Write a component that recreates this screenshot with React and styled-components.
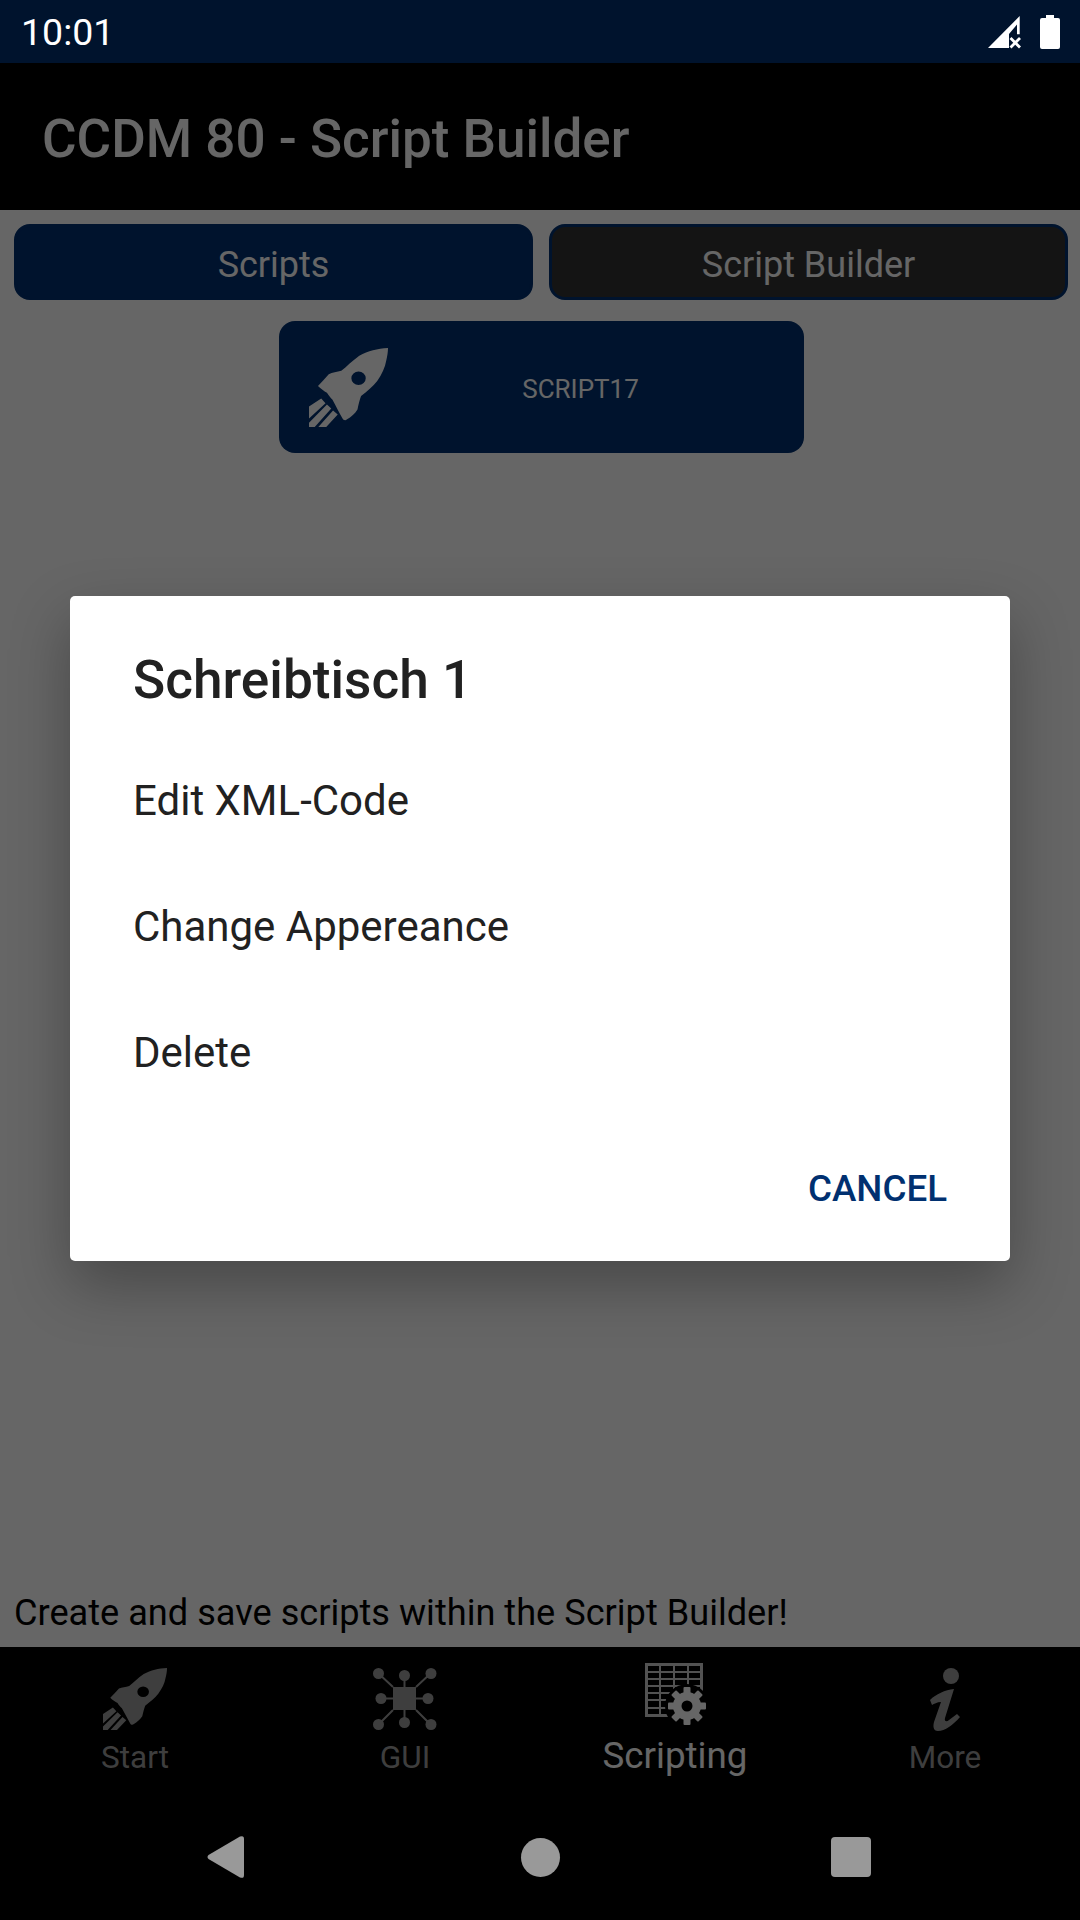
import React from 'react';
import styled, { createGlobalStyle } from 'styled-components';

const GlobalStyle = createGlobalStyle`
  html, body {
    margin: 0;
    padding: 0;
    background: #000;
  }
  * {
    box-sizing: border-box;
  }
  body {
    font-family: Roboto, "Noto Sans", sans-serif;
  }
`;

const Screen = styled.div`
  width: 1080px;
  height: 1920px;
  display: flex;
  flex-direction: column;
  overflow: hidden;
`;

const StatusBar = styled.div`
  height: 63px;
  flex: none;
  background: #00132d;
  display: flex;
  align-items: center;
  padding: 0 20px 0 21px;
  color: #fff;
`;

const Clock = styled.span`
  font-size: 37.5px;
  flex: 1;
`;

const StatusIcons = styled.div`
  display: flex;
  align-items: center;
  gap: 16px;
`;

const Main = styled.div`
  position: relative;
  flex: 1;
  display: flex;
  flex-direction: column;
  min-height: 0;
  background: #fff;
`;

const Toolbar = styled.header`
  height: 147px;
  flex: none;
  background: #000;
  color: #fff;
  display: flex;
  align-items: center;
  padding: 5px 0 0 42px;
  font-size: 53px;
  font-weight: 500;
`;

const Content = styled.main`
  flex: 1;
  min-height: 0;
  display: flex;
  flex-direction: column;
  padding: 14px 12px 0 14px;
`;

const TabSwitch = styled.div`
  display: grid;
  grid-template-columns: 519px 519px;
  column-gap: 16px;
`;

const SwitchButton = styled.div`
  height: 76px;
  border-radius: 16px;
  display: flex;
  align-items: center;
  justify-content: center;
  padding-top: 5px;
  color: #fff;
  font-size: 36px;
  background: ${p => (p.$active ? '#343434' : '#003070')};
  border: 3px solid #003070;
`;

const ScriptCard = styled.div`
  width: 525px;
  height: 132px;
  margin: 21px 0 0 265px;
  border-radius: 16px;
  background: #003070;
  color: #fff;
  display: flex;
  align-items: center;
  padding: 0 31px 0 30px;
`;

const ScriptLabel = styled.span`
  flex: 1;
  text-align: center;
  padding-top: 3px;
  font-size: 26px;
`;

const Hint = styled.p`
  margin: auto 0 13px;
  color: #000;
  font-size: 36.15px;
  line-height: 43px;
`;

const TabBar = styled.nav`
  height: 147px;
  flex: none;
  background: #000;
  display: grid;
  grid-template-columns: 270px 270px 270px 270px;
`;

const TabItem = styled.div`
  display: flex;
  flex-direction: column;
  align-items: center;
  padding-top: ${p => (p.$active ? '16px' : '21px')};
  color: ${p => (p.$active ? '#fff' : '#9c9c9c')};
  font-size: ${p => (p.$active ? '36.75px' : '31.5px')};
  line-height: 40px;
`;

const TabIcon = styled.div`
  height: 63px;
  margin-bottom: ${p => (p.$active ? '10px' : '7px')};
  display: flex;
  justify-content: center;
`;

const Scrim = styled.div`
  position: absolute;
  inset: 0;
  background: rgba(0, 0, 0, 0.6);
  display: flex;
  align-items: center;
  justify-content: center;
`;

const Dialog = styled.div`
  width: 940px;
  height: 665px;
  background: #fff;
  border-radius: 5px;
  box-shadow: 0 24px 60px rgba(0, 0, 0, 0.3);
  padding: 50px 0 26px;
  display: flex;
  flex-direction: column;
  color: #212121;
`;

const DialogTitle = styled.h2`
  margin: 0 0 23px;
  padding-left: 63px;
  font-size: 53.2px;
  line-height: 68px;
  font-weight: 500;
`;

const DialogItem = styled.div`
  height: 126px;
  flex: none;
  padding-left: 63px;
  display: flex;
  align-items: center;
  font-size: 42px;
`;

const DialogActions = styled.div`
  margin-top: auto;
  height: 94px;
  padding-right: 63px;
  display: flex;
  align-items: center;
  justify-content: flex-end;
`;

const CancelButton = styled.span`
  color: #003070;
  font-size: 36.75px;
  font-weight: 500;
`;

const SystemNav = styled.div`
  height: 126px;
  flex: none;
  background: #000;
  display: grid;
  grid-template-columns: 450px 180px 450px;
  align-items: center;
  justify-items: center;
`;

const BackSlot = styled.div`
  justify-self: end;
  margin-right: 206px;
  display: flex;
`;

const HomeDot = styled.div`
  width: 39px;
  height: 39px;
  border-radius: 50%;
  background: #999;
`;

const RecentSquare = styled.div`
  justify-self: start;
  margin-left: 201px;
  width: 40px;
  height: 40px;
  border-radius: 4px;
  background: #999;
`;

const SignalIcon = () => (
  <svg width="36" height="34" viewBox="0 0 36 34" fill="#fff">
    <path d="M0 33 L31.7 1 V19.3 H29 V9.5 L21 19 V33 Z" />
    <path d="M22.5 23 L32 32.5 M32 23 L22.5 32.5" stroke="#fff" strokeWidth="2.8" fill="none" />
  </svg>
);

const BatteryIcon = () => (
  <svg width="20" height="34" viewBox="0 0 20 34" fill="#fff">
    <path d="M6 0 H14 V3 H18 Q20 3 20 5 V32 Q20 34 18 34 H2 Q0 34 0 32 V5 Q0 3 2 3 H6 Z" />
  </svg>
);

const RocketIcon = ({ width, height }) => (
  <svg width={width} height={height} viewBox="0 0 220 235" preserveAspectRatio="none" fill="currentColor">
    <path
      fillRule="evenodd"
      d="M220 0 C190 2 165 8 140 23 C120 38 105 55 90 68 C78 72 65 73 55 78 C45 90 35 102 25 113 C33 122 42 128 50 133 C55 142 60 148 65 153 C75 172 85 195 95 213 C100 216 103 215 105 213 C118 205 128 195 135 183 C138 168 141 155 145 143 C162 128 178 115 190 98 C203 78 212 58 215 38 C218 25 220 12 220 0 Z M138 70 A20 20 0 1 0 138.01 110 A20 20 0 1 0 138 70 Z"
    />
    <path d="M0 174 L34 150 L46 164 L0 210 Z M50 168 L62 180 L16 235 H0 V222 Z M67 186 L80 198 L48 235 H26 Z" />
  </svg>
);

const GuiIcon = () => (
  <svg width="64" height="62" viewBox="0 0 64 62" fill="currentColor" stroke="currentColor">
    <rect x="20" y="19" width="23" height="23" strokeWidth="0" />
    <g strokeWidth="2">
      <path d="M5 5 L20 19 M58 5 L43 19 M5 57 L20 42 M58 57 L43 42" />
      <path d="M31.5 8 V19 M8.5 30.5 H20 M55 30.5 H43 M31.5 55 V42" />
    </g>
    <g strokeWidth="0">
      <circle cx="5.5" cy="5.5" r="5.5" />
      <circle cx="58" cy="5.5" r="5.5" />
      <circle cx="5.5" cy="56.5" r="5.5" />
      <circle cx="58" cy="56.5" r="5.5" />
      <circle cx="31.5" cy="7.5" r="5.5" />
      <circle cx="8" cy="30.5" r="5.5" />
      <circle cx="55" cy="30.5" r="5.5" />
      <circle cx="31.5" cy="54.5" r="5.5" />
    </g>
  </svg>
);

const gearTeeth = [0, 45, 90, 135, 180, 225, 270, 315];

const ScriptingIcon = () => (
  <svg width="61" height="62" viewBox="0 0 61 62" fill="currentColor">
    <g stroke="currentColor" fill="none" opacity="0.8">
      <rect x="1.5" y="1.5" width="55" height="51" strokeWidth="3" />
      <path d="M15 1 V53 M29 1 V53 M43 1 V53" strokeWidth="2" />
      <path d="M1 9 H57 M1 16 H57 M1 23 H57 M1 30 H57 M1 37 H57 M1 45 H57" strokeWidth="1.8" />
    </g>
    <circle cx="42" cy="43" r="22" fill="#000" />
    <circle cx="42" cy="43" r="14" />
    {gearTeeth.map(angle => (
      <rect key={angle} x="38.5" y="24" width="7" height="8" rx="1" transform={`rotate(${angle} 42 43)`} />
    ))}
    <circle cx="42" cy="43" r="5.5" fill="#000" />
  </svg>
);

const InfoIcon = () => (
  <svg width="31" height="63" viewBox="0 0 31 63" fill="currentColor">
    <circle cx="21" cy="8" r="8" />
    <path d="M0 32 C6 26 15 22 24 21 L15 50 C14 54 17 54 19 52 L27 46 L30 49 C23 57 15 63 8 63 C3 63 3 58 4 54 L11 34 C7 34 4 36 2 37 Z" />
  </svg>
);

const BackIcon = () => (
  <svg width="37" height="42" viewBox="0 0 37 42" fill="#999">
    <path d="M1.5 19 L33 .6 Q37 -1 37 3 V39 Q37 43 33 41.4 L1.5 23 Q-.5 21 1.5 19 Z" />
  </svg>
);

const dialogItems = ['Edit XML-Code', 'Change Appereance', 'Delete'];

const App = () => {
  return (
    <Screen>
      <GlobalStyle />
      <StatusBar>
        <Clock>10:01</Clock>
        <StatusIcons>
          <SignalIcon />
          <BatteryIcon />
        </StatusIcons>
      </StatusBar>

      <Main>
        <Toolbar>CCDM 80 - Script Builder</Toolbar>

        <Content>
          <TabSwitch>
            <SwitchButton>Scripts</SwitchButton>
            <SwitchButton $active>Script Builder</SwitchButton>
          </TabSwitch>
          <ScriptCard>
            <RocketIcon width={79} height={79} />
            <ScriptLabel>SCRIPT17</ScriptLabel>
          </ScriptCard>
          <Hint>Create and save scripts within the Script Builder!</Hint>
        </Content>

        <TabBar>
          <TabItem>
            <TabIcon><RocketIcon width={64} height={62} /></TabIcon>
            Start
          </TabItem>
          <TabItem>
            <TabIcon><GuiIcon /></TabIcon>
            GUI
          </TabItem>
          <TabItem $active>
            <TabIcon $active><ScriptingIcon /></TabIcon>
            Scripting
          </TabItem>
          <TabItem>
            <TabIcon><InfoIcon /></TabIcon>
            More
          </TabItem>
        </TabBar>

        <Scrim>
          <Dialog>
            <DialogTitle>Schreibtisch 1</DialogTitle>
            {dialogItems.map(item => (
              <DialogItem key={item}>{item}</DialogItem>
            ))}
            <DialogActions>
              <CancelButton>CANCEL</CancelButton>
            </DialogActions>
          </Dialog>
        </Scrim>
      </Main>

      <SystemNav>
        <BackSlot><BackIcon /></BackSlot>
        <HomeDot />
        <RecentSquare />
      </SystemNav>
    </Screen>
  );
};

export default App;
